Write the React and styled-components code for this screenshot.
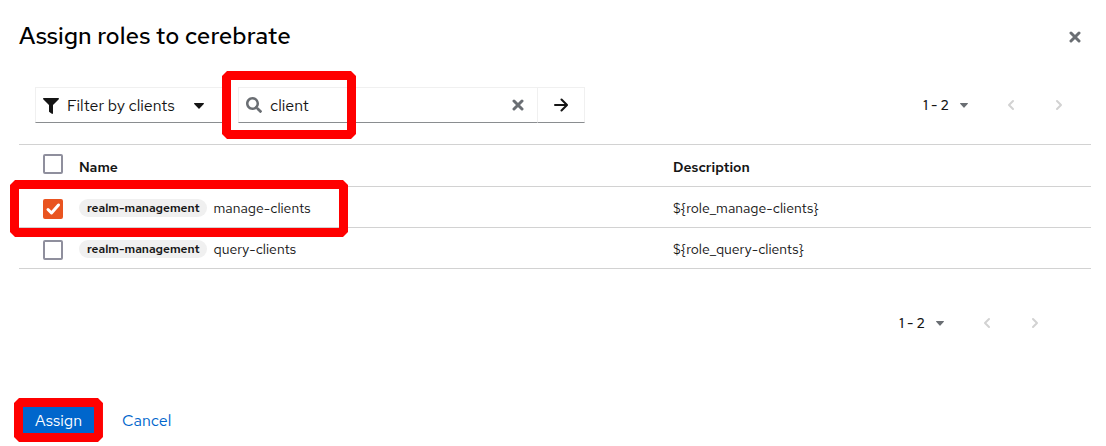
import React, { useState } from "react";
import styled, { createGlobalStyle } from "styled-components";

const GlobalStyle = createGlobalStyle`
  *, *::before, *::after { box-sizing: border-box; }
  body {
    margin: 0;
    background: #fff;
    color: #151515;
    font-family: "Red Hat Text", Inter, "Liberation Sans", sans-serif;
    font-size: 16px;
    line-height: 24px;
  }
  button, input { font: inherit; color: inherit; }
  button { cursor: pointer; }
`;

const Dialog = styled.section`
  padding: 18px 15px 4px 19px;
`;

const Header = styled.header`
  display: flex;
  align-items: flex-end;
  justify-content: space-between;
  height: 36px;
`;

const Title = styled.h1`
  margin: 0;
  font-size: 24px;
  font-weight: 500;
  line-height: 36px;
  color: #000;
`;

const IconButton = styled.button`
  display: flex;
  align-items: center;
  justify-content: center;
  width: ${(p) => p.$width || 32}px;
  height: 34px;
  padding: 0;
  border: 0;
  background: none;
  color: ${(p) => p.$color || "#6a6e73"};
`;

const Toolbar = styled.div`
  display: flex;
  align-items: center;
  gap: 12px;
  margin: 33px 0 21px;
  padding: 0 8px 0 16px;
`;

const control = `
  height: 36px;
  border: 1px solid #f0f0f0;
  border-bottom-color: #8a8d90;
  background: #fff;
`;

const FilterToggle = styled.button`
  ${control}
  display: flex;
  align-items: center;
  gap: 8px;
  width: 191px;
  padding: 1px 7px 0;
  text-align: left;
  span { flex: 0 0 auto; }
  svg:last-child { margin-left: 11px; }
`;

const Search = styled.form`
  position: relative;
  display: flex;
  width: 347px;
`;

const SearchField = styled.label`
  ${control}
  display: flex;
  flex: 1;
  align-items: center;
  gap: 8px;
  padding-left: 7px;
`;

const SearchInput = styled.input`
  flex: 1;
  min-width: 0;
  padding: 1px 0 0;
  border: 0;
  outline: 0;
  background: none;
`;

const SearchSubmit = styled.button`
  ${control}
  display: flex;
  align-items: center;
  justify-content: center;
  width: 48px;
  margin-left: -1px;
  padding: 0;
`;

const Highlight = styled.span`
  position: absolute;
  inset: ${(p) => p.$inset};
  width: ${(p) => p.$width || "auto"};
  border: 9px solid #f00;
  clip-path: polygon(
    5px 0, calc(100% - 5px) 0, 100% 5px, 100% calc(100% - 5px),
    calc(100% - 5px) 100%, 5px 100%, 0 calc(100% - 5px), 0 5px
  );
  pointer-events: none;
`;

const Pager = styled.nav`
  display: flex;
  align-items: center;
  margin-left: auto;
`;

const PagerToggle = styled.button`
  display: flex;
  align-items: center;
  gap: 11px;
  margin-right: 19px;
  padding: 0;
  border: 0;
  background: none;
  font-size: 14px;
  font-weight: 500;
`;

const RoleTable = styled.table`
  width: 100%;
  border-collapse: collapse;
  table-layout: fixed;
  border-top: 1px solid #d2d2d2;
  font-size: 14px;
  line-height: 20px;
`;

const Row = styled.tr`
  height: 41px;
  border-bottom: 1px solid #d2d2d2;
`;

const HeadRow = styled(Row)`
  height: 42px;
`;

const Cell = styled.td`
  position: relative;
  padding: 2px 0 0;
  text-align: left;
  vertical-align: middle;
`;

const HeadCell = styled.th`
  width: ${(p) => p.$width || "auto"};
  padding: 2px 0 0;
  font-weight: 600;
  text-align: left;
  vertical-align: middle;
`;

const CheckCell = styled(Cell)`
  padding: 4px 0 0 24px;
`;

const CheckHeadCell = styled(HeadCell)`
  padding: 0 0 4px 24px;
`;

const CheckWrap = styled.span`
  position: relative;
  display: block;
  width: 20px;
  height: 20px;
  svg { position: absolute; inset: 0; pointer-events: none; }
`;

const Checkbox = styled.input`
  display: block;
  appearance: none;
  width: 20px;
  height: 20px;
  margin: 0;
  border: 2px solid #8f8f9d;
  border-radius: 2px;
  background: #fff;
  &:checked { border-color: #e95420; background: #e95420; }
`;

const RoleName = styled.div`
  display: flex;
  align-items: center;
  gap: 7px;
`;

const Badge = styled.span`
  padding: 1px 7px 0 8px;
  border-radius: 9px;
  background: #f0f0f0;
  font-size: 12px;
  font-weight: 600;
  line-height: 17px;
`;

const BottomBar = styled.div`
  display: flex;
  margin-top: 37px;
  padding-right: 32px;
`;

const Footer = styled.footer`
  display: flex;
  align-items: center;
  margin-top: 62px;
`;

const AssignWrap = styled.div`
  position: relative;
`;

const Primary = styled.button`
  display: block;
  height: 36px;
  padding: 1px 16px 0;
  border: 0;
  border-radius: 3px;
  background: #06c;
  color: #fff;
`;

const LinkButton = styled.button`
  height: 36px;
  padding: 1px 24px 0;
  border: 0;
  background: none;
  color: #06c;
`;

const Times = ({ size = 12 }) => (
  <svg width={size} height={size} viewBox="0 0 12 12" aria-hidden="true">
    <path d="M2 2l8 8M10 2l-8 8" stroke="currentColor" strokeWidth="3" strokeLinecap="round" />
  </svg>
);

const Caret = ({ width = 10, height = 6, color = "#151515" }) => (
  <svg width={width} height={height} viewBox="0 0 10 6" preserveAspectRatio="none" fill={color} aria-hidden="true">
    <path d="M.6 0h8.8c.5 0 .8.6.4 1L5.5 5.5a.7.7 0 0 1-1 0L.2 1C-.2.6.1 0 .6 0z" />
  </svg>
);

const Funnel = () => (
  <svg width="16" height="16" viewBox="0 0 512 512" fill="currentColor" aria-hidden="true">
    <path d="M487.976 0H24.028C2.71 0-8.047 25.866 7.058 40.971L192 225.941V432c0 7.831 3.821 15.17 10.237 19.662l80 55.98C298.02 518.69 320 507.493 320 487.98V225.941l184.947-184.97C520.021 25.896 509.338 0 487.976 0z" />
  </svg>
);

const Magnifier = () => (
  <svg width="16" height="16" viewBox="0 0 512 512" fill="#6a6e73" aria-hidden="true">
    <path d="M505 442.7L405.3 343c-4.500-4.500-10.600-7-17-7H372c27.600-35.300 44-79.700 44-128C416 93.100 322.900 0 208 0S0 93.100 0 208s93.100 208 208 208c48.300 0 92.700-16.400 128-44v16.300c0 6.400 2.500 12.500 7 17l99.700 99.700c9.400 9.400 24.600 9.400 33.900 0l28.300-28.300c9.400-9.400 9.400-24.600.1-34zM208 336c-70.700 0-128-57.200-128-128 0-70.700 57.200-128 128-128 70.700 0 128 57.200 128 128 0 70.700-57.200 128-128 128z" />
  </svg>
);

const Arrow = () => (
  <svg width="14" height="14" viewBox="0 0 14 14" fill="none" stroke="#151515" strokeWidth="2" strokeLinecap="round" strokeLinejoin="round" aria-hidden="true">
    <path d="M1 7h11.500M7.500 1.500L13 7l-5.500 5.500" />
  </svg>
);

const Chevron = ({ next }) => (
  <svg width="8" height="12" viewBox="0 0 8 12" fill="none" stroke="currentColor" strokeWidth="2" strokeLinecap="round" strokeLinejoin="round" aria-hidden="true">
    <path d={next ? "M2 2l4 4-4 4" : "M6 2L2 6l4 4"} />
  </svg>
);

const Pagination = ({ label }) => (
  <Pager aria-label={label}>
    <PagerToggle type="button">
      1 - 2 <Caret width={8} height={5} color="#6a6e73" />
    </PagerToggle>
    <IconButton type="button" $width={48} $color="#d2d2d2" aria-label="Previous page">
      <Chevron />
    </IconButton>
    <IconButton type="button" $width={48} $color="#d2d2d2" aria-label="Next page">
      <Chevron next />
    </IconButton>
  </Pager>
);

const Check = ({ label, checked, onChange }) => (
  <CheckWrap>
    <Checkbox type="checkbox" aria-label={label} checked={checked} onChange={onChange} />
    {checked && (
      <svg width="20" height="20" viewBox="0 0 20 20" fill="none" stroke="#fff" strokeWidth="3" strokeLinecap="round" strokeLinejoin="round" aria-hidden="true">
        <path d="M5 10.500l3.500 3.500L15.500 6" />
      </svg>
    )}
  </CheckWrap>
);

const roles = ["manage-clients", "query-clients"];

export default function App() {
  const [query, setQuery] = useState("client");
  const [selected, setSelected] = useState(["manage-clients"]);
  const toggle = (role) =>
    setSelected((s) => (s.includes(role) ? s.filter((r) => r !== role) : [...s, role]));
  const all = selected.length === roles.length;

  return (
    <Dialog role="dialog" aria-labelledby="dialog-title">
      <GlobalStyle />
      <Header>
        <Title id="dialog-title">Assign roles to cerebrate</Title>
        <IconButton type="button" aria-label="Close">
          <Times />
        </IconButton>
      </Header>

      <Toolbar>
        <FilterToggle type="button">
          <Funnel />
          <span>Filter by clients</span>
          <Caret />
        </FilterToggle>
        <Search onSubmit={(e) => e.preventDefault()}>
          <SearchField>
            <Magnifier />
            <SearchInput aria-label="Search" value={query} onChange={(e) => setQuery(e.target.value)} />
            <IconButton type="button" $width={38} aria-label="Clear" onClick={() => setQuery("")}>
              <Times />
            </IconButton>
          </SearchField>
          <SearchSubmit type="submit" aria-label="Search">
            <Arrow />
          </SearchSubmit>
          <Highlight $inset="-16px auto -16px -16px" $width="134px" />
        </Search>
        <Pagination label="Top pagination" />
      </Toolbar>

      <RoleTable>
        <thead>
          <HeadRow>
            <CheckHeadCell $width="60px">
              <Check
                label="Select all rows"
                checked={all}
                onChange={() => setSelected(all ? [] : roles)}
              />
            </CheckHeadCell>
            <HeadCell>Name</HeadCell>
            <HeadCell $width="39%">Description</HeadCell>
          </HeadRow>
        </thead>
        <tbody>
          {roles.map((role, i) => (
            <Row key={role}>
              <CheckCell>
                <Check label={role} checked={selected.includes(role)} onChange={() => toggle(role)} />
                {i === 0 && <Highlight $inset="-7px auto -10px -9px" $width="338px" />}
              </CheckCell>
              <Cell>
                <RoleName>
                  <Badge>realm-management</Badge>
                  {role}
                </RoleName>
              </Cell>
              <Cell>{"${role_" + role + "}"}</Cell>
            </Row>
          ))}
        </tbody>
      </RoleTable>

      <BottomBar>
        <Pagination label="Bottom pagination" />
      </BottomBar>

      <Footer>
        <AssignWrap>
          <Primary type="button">Assign</Primary>
          <Highlight $inset="-4px -5px -4px -5px" />
        </AssignWrap>
        <LinkButton type="button">Cancel</LinkButton>
      </Footer>
    </Dialog>
  );
}
